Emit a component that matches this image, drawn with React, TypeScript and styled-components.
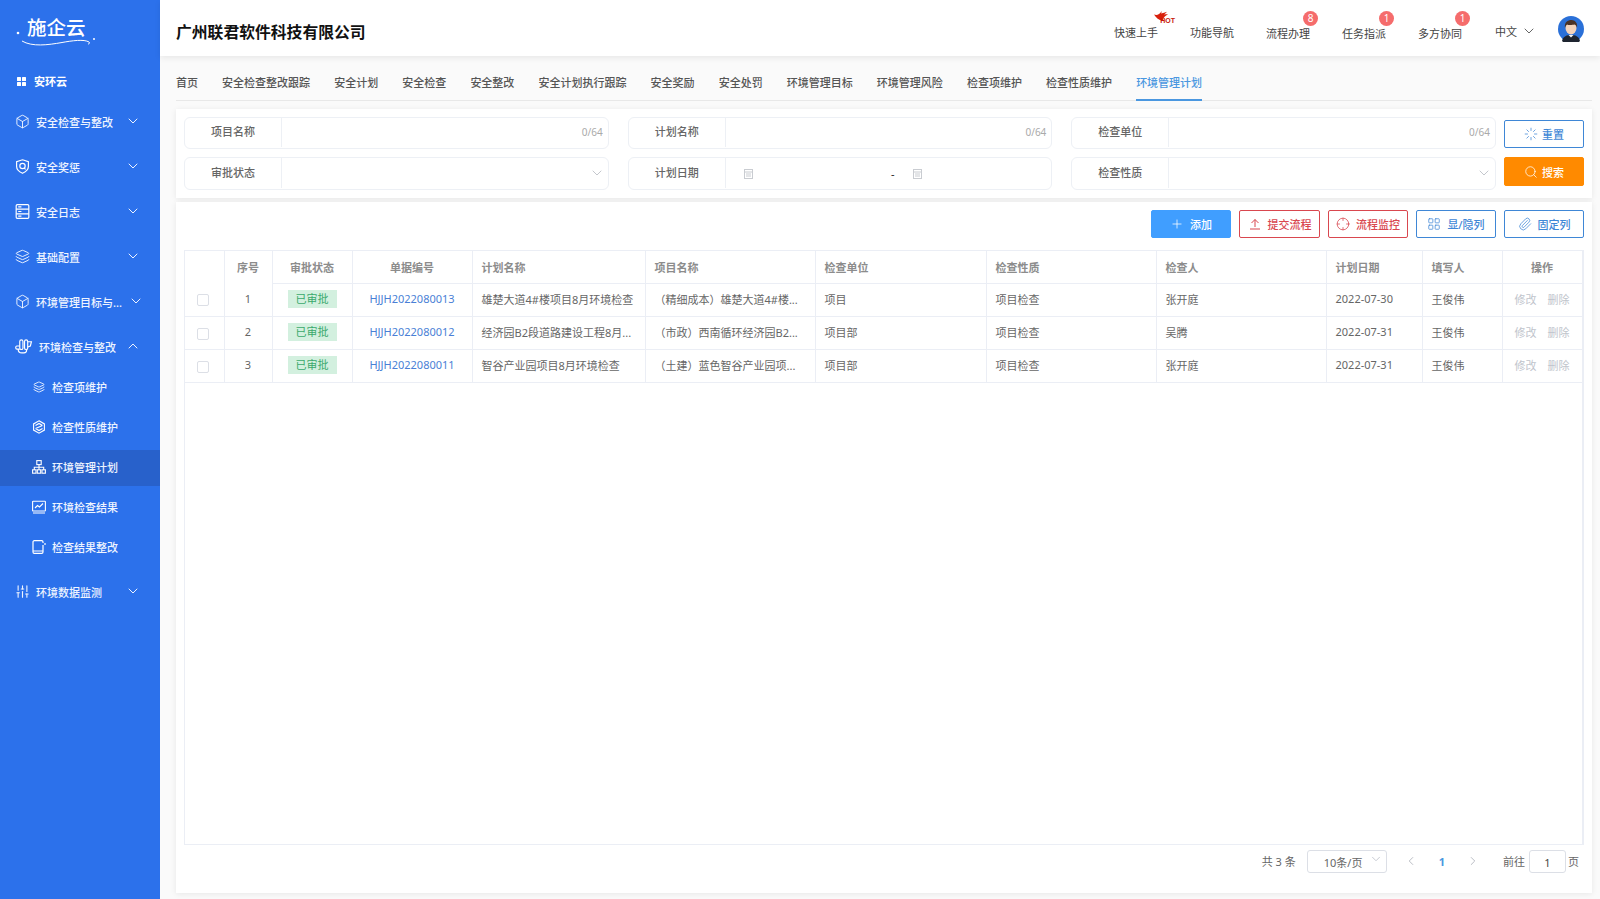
import React from 'react';
import styled, { createGlobalStyle } from 'styled-components';
import {
    Box, ChevronDown, ChevronLeft, ChevronRight, ChevronUp, Crosshair, Layers, LayoutGrid,
    Loader, Paperclip, Plus, Search, SlidersVertical,
} from 'lucide-react';

const GlobalStyle = createGlobalStyle`
    html, body { margin: 0; padding: 0; background: #fafafa; }
    body {
        font-family: "Noto Sans", "Noto Sans CJK SC", "Liberation Sans", sans-serif;
        font-size: 11px;
        color: #666;
    }
    * { box-sizing: border-box; }
`;

const Page = styled.div`
    display: flex;
    width: 1600px;
    height: 899px;
    overflow: hidden;
`;

/* ---------- sidebar ---------- */

const Sidebar = styled.aside`
    width: 160px;
    flex-shrink: 0;
    background: #2c71eb;
    color: #fff;
    display: flex;
    flex-direction: column;
`;

const Logo = styled.div`
    position: relative;
    height: 60px;
    padding: 15px 0 0 27px;
    font-size: 19.5px;
    line-height: 26px;
    font-weight: 500;
    color: #fff;
`;

const LogoSwoosh = styled.svg`
    position: absolute;
    left: 14px;
    top: 27px;
    width: 84px;
    height: 22px;
`;

const Brand = styled.div`
    height: 40px;
    display: flex;
    align-items: center;
    padding: 2px 0 0 17px;
    gap: 8px;
    font-weight: 700;
`;

const BrandIcon = styled.svg`
    width: 9px;
    height: 9px;
`;

const MenuRow = styled.div<{ $wide?: boolean }>`
    height: 45px;
    display: flex;
    align-items: center;
    padding: 0 19px 2px 15px;
    gap: 6px;
    color: #eef4ff;
    font-weight: 500;
    svg.icon { flex-shrink: 0; width: ${p => (p.$wide ? '18px' : '15px')}; height: 15px; }
`;

const MenuText = styled.span`
    flex: 1;
    white-space: nowrap;
`;

const Caret = styled.span`
    display: flex;
    width: 16px;
    margin-top: -2px;
    svg { width: 16px; height: 16px; }
`;

const SubList = styled.div`
    display: flex;
    flex-direction: column;
    gap: 4px;
    padding-bottom: 4px;
`;

const SubRow = styled.div<{ $active?: boolean }>`
    height: 36px;
    display: flex;
    align-items: center;
    padding: 0 0 2px 32px;
    gap: 6px;
    color: #eef4ff;
    font-weight: 500;
    background: ${p => (p.$active ? '#2861cb' : 'transparent')};
`;

const SubIcon = styled.span`
    width: 14px;
    height: 14px;
    display: flex;
    align-items: center;
    justify-content: center;
    svg { width: 14px; height: 14px; }
`;

const SmallLayers = styled(Layers)`
    && { width: 12px; height: 12px; }
`;

/* ---------- top bar ---------- */

const Main = styled.div`
    flex: 1;
    min-width: 0;
    display: flex;
    flex-direction: column;
`;

const TopBar = styled.header`
    height: 56px;
    flex-shrink: 0;
    background: #fff;
    box-shadow: 0 2px 6px rgba(0, 0, 0, 0.08);
    display: flex;
    align-items: center;
    padding: 0 16px;
    position: relative;
`;

const Company = styled.h1`
    margin: 0;
    flex: 1;
    padding-top: 6px;
    font-size: 15.8px;
    font-weight: 700;
    color: #111;
`;

const NavItems = styled.nav`
    display: flex;
    align-items: center;
    gap: 32px;
    padding-top: 8px;
`;

const NavItem = styled.span<{ $low?: boolean }>`
    position: relative;
    color: #444;
    white-space: nowrap;
    padding-top: ${p => (p.$low ? '2px' : '0')};
`;

const Badge = styled.span`
    position: absolute;
    right: -8px;
    top: -12px;
    width: 15px;
    height: 15px;
    border-radius: 50%;
    background: #f56c6c;
    color: #fff;
    font-size: 10px;
    line-height: 15px;
    text-align: center;
`;

const Hot = styled.span`
    position: absolute;
    right: -17px;
    top: -13px;
    width: 21px;
    height: 13px;
    color: #c8180a;
    font-size: 7px;
    line-height: 7px;
    font-weight: 800;
    font-family: "Liberation Sans", sans-serif;
    svg { position: absolute; left: 0; top: 0; width: 15px; height: 10px; }
    b { position: absolute; right: 0; bottom: 0; }
`;

const Lang = styled.span`
    display: flex;
    align-items: center;
    gap: 4px;
    margin-left: 33px;
    color: #444;
    padding-top: 6px;
    svg { width: 16px; height: 16px; color: #666; }
`;

const Avatar = styled.svg`
    width: 26px;
    height: 26px;
    margin-left: 21px;
    margin-top: 2px;
`;

/* ---------- tabs ---------- */

const Content = styled.div`
    flex: 1;
    min-height: 0;
    display: flex;
    flex-direction: column;
    padding: 0 8px 6px 16px;
`;

const Tabs = styled.div`
    height: 45px;
    flex-shrink: 0;
    display: flex;
    gap: 24.1px;
    border-bottom: 1px solid #e8e8e8;
`;

const Tab = styled.div<{ $active?: boolean }>`
    height: 45px;
    line-height: 53px;
    font-size: 11px;
    font-weight: 500;
    color: ${p => (p.$active ? '#4a97e0' : '#555')};
    border-bottom: ${p => (p.$active ? '2px solid #4a97e0' : 'none')};
    white-space: nowrap;
`;

/* ---------- filters ---------- */

const FilterCard = styled.section`
    margin-top: 8px;
    height: 89px;
    flex-shrink: 0;
    background: #fff;
    box-shadow: 0 1px 6px rgba(0, 0, 0, 0.08);
    padding: 8px;
    display: flex;
    gap: 8px;
`;

const FieldGrid = styled.div`
    flex: 1;
    display: grid;
    grid-template-columns: repeat(3, minmax(0, 1fr));
    grid-template-rows: 32px 33px;
    gap: 8px 19px;
`;

const Field = styled.div`
    display: flex;
    border: 1px solid #edf0f5;
    border-radius: 6px;
    background: #fff;
`;

const FieldLabel = styled.label`
    width: 97px;
    flex-shrink: 0;
    margin: 0 0 1px;
    padding-bottom: 3px;
    border-right: 1px solid #edf0f5;
    display: flex;
    align-items: center;
    justify-content: center;
    color: #666;
    font-weight: 500;
`;

const FieldBody = styled.div`
    flex: 1;
    display: flex;
    align-items: center;
    justify-content: flex-end;
    padding: 0 5px 2px 0;
    color: #aaa;
    font-size: 10px;
    svg { width: 16px; height: 16px; color: #c4c7cd; margin-right: -2px; }
`;

const DateBody = styled.div`
    flex: 1;
    min-width: 0;
    display: flex;
    align-items: center;
`;

const DatePart = styled.div`
    width: 164px;
    padding-left: 18px;
    display: flex;
    svg { width: 9px; height: 10px; }
    &:last-child { width: auto; flex: 1; padding-left: 17px; }
`;

const DateDash = styled.span`
    width: 6px;
    color: #222;
    text-align: center;
`;

const FilterButtons = styled.div`
    width: 80px;
    display: flex;
    flex-direction: column;
    gap: 9px;
    padding-top: 3px;
`;

const Button = styled.button<{ $tone: 'outline' | 'danger' | 'primary' | 'orange'; $tight?: boolean; $wide?: boolean }>`
    width: ${p => (p.$wide ? '81px' : '80px')};
    height: ${p => (p.$tone === 'orange' ? '29px' : '28px')};
    padding: 0;
    border-radius: 2px;
    display: flex;
    align-items: center;
    justify-content: center;
    gap: ${p => (p.$tight ? '4px' : '6px')};
    font: inherit;
    font-weight: 500;
    cursor: pointer;
    border: 1px solid ${p => ({ outline: '#3f87d6', danger: '#d9474f', primary: '#409eff', orange: '#ff8a00' }[p.$tone])};
    background: ${p => ({ outline: '#fff', danger: '#fff', primary: '#409eff', orange: '#ff8a00' }[p.$tone])};
    color: ${p => ({ outline: '#3f87d6', danger: '#d9474f', primary: '#fff', orange: '#fff' }[p.$tone])};
    svg { width: 14px; height: 14px; }
`;

/* ---------- table ---------- */

const TableCard = styled.section`
    margin-top: 4px;
    flex: 1;
    min-height: 0;
    background: #fff;
    box-shadow: 0 1px 6px rgba(0, 0, 0, 0.08);
    padding: 8px 8px 0;
    display: flex;
    flex-direction: column;
`;

const Toolbar = styled.div`
    height: 28px;
    flex-shrink: 0;
    display: flex;
    justify-content: flex-end;
    gap: 8px;
`;

const TableBox = styled.div`
    margin-top: 12px;
    height: 595px;
    flex-shrink: 0;
    border: 1px solid #ebeef5;
    border-right-width: 2px;
`;

const Table = styled.table`
    width: 100%;
    table-layout: fixed;
    border-collapse: collapse;
`;

const Th = styled.th<{ $left?: boolean; $open?: boolean }>`
    height: 32px;
    padding: 0 9px;
    font-size: 11px;
    font-weight: 700;
    color: #8c8c8c;
    text-align: ${p => (p.$left ? 'left' : 'center')};
    border-right: 1px solid #ebeef5;
    border-bottom: ${p => (p.$open ? 'none' : '1px solid #ebeef5')};
`;

const Td = styled.td<{ $left?: boolean }>`
    height: 33px;
    padding: 0 9px 2px;
    color: #666;
    text-align: ${p => (p.$left ? 'left' : 'center')};
    border-right: 1px solid #ebeef5;
    border-bottom: 1px solid #ebeef5;
    white-space: nowrap;
`;

const CheckCell = styled(Td)`
    padding: 2px 0 0 12px;
`;

const Check = styled.span`
    display: block;
    width: 12px;
    height: 12px;
    border: 1px solid #dcdfe6;
    border-radius: 2px;
    background: #fff;
`;

const StatusTag = styled.span`
    display: inline-block;
    width: 49px;
    height: 18px;
    margin-top: 1px;
    line-height: 18px;
    text-align: center;
    background: #d3f0df;
    color: #3aa96c;
`;

const DocLink = styled.a`
    color: #4a7fd6;
    text-decoration: none;
`;

const OpLink = styled.span`
    color: #c0c4cc;
    & + & { margin-left: 11px; }
`;

/* ---------- pagination ---------- */

const Pager = styled.div`
    flex: 1;
    display: flex;
    align-items: center;
    justify-content: flex-end;
    padding: 0 5px 16px 0;
    color: #666;
`;

const PagerSelect = styled.div`
    position: relative;
    width: 80px;
    height: 23px;
    margin-left: 11px;
    border: 1px solid #dcdfe6;
    border-radius: 3px;
    line-height: 24px;
    padding-left: 16px;
    svg { position: absolute; right: 3px; top: 1px; width: 14px; height: 14px; color: #c0c4cc; }
`;

const PagerArrow = styled.span<{ $gapLeft?: number; $gapRight?: number }>`
    display: flex;
    color: #b0b4bb;
    margin: 0 ${p => p.$gapRight ?? 0}px 0 ${p => p.$gapLeft ?? 0}px;
    svg { width: 14px; height: 14px; }
`;

const PagerNum = styled.span`
    color: #4a97e0;
    font-weight: 700;
    margin: 0 21px;
`;

const PagerInput = styled.div`
    width: 37px;
    height: 23px;
    margin: 0 2px 0 4px;
    border: 1px solid #dcdfe6;
    border-radius: 3px;
    text-align: center;
    line-height: 24px;
    color: #444;
`;

const CalendarIcon = () => (
    <svg viewBox="0 0 9 10" fill="none" stroke="#c9ccd1" strokeWidth="1">
        <rect x="0.5" y="0.5" width="8" height="9" />
        <path d="M0.5 3h8M2 5h5M2 7h5" />
    </svg>
);

const columns = [39, 48, 80, 120, 173, 170, 171, 170, 170, 96, 80, 80];

const rows = [
    { no: 1, code: 'HJJH2022080013', plan: '雄楚大道4#楼项目8月环境检查', project: '（精细成本）雄楚大道4#楼...', unit: '项目', person: '张开庭', date: '2022-07-30' },
    { no: 2, code: 'HJJH2022080012', plan: '经济园B2段道路建设工程8月...', project: '（市政）西南循环经济园B2...', unit: '项目部', person: '吴腾', date: '2022-07-31' },
    { no: 3, code: 'HJJH2022080011', plan: '智谷产业园项目8月环境检查', project: '（土建）蓝色智谷产业园项...', unit: '项目部', person: '张开庭', date: '2022-07-31' },
];

const tabs = ['首页', '安全检查整改跟踪', '安全计划', '安全检查', '安全整改', '安全计划执行跟踪', '安全奖励', '安全处罚', '环境管理目标', '环境管理风险', '检查项维护', '检查性质维护', '环境管理计划'];

const App: React.FC = () => {
    return (
        <Page>
            <GlobalStyle />
            <Sidebar>
                <Logo>
                    施企云
                    <LogoSwoosh viewBox="0 0 84 22" fill="none">
                        <circle cx="4" cy="6" r="1.3" fill="#fff" />
                        <path d="M8 14c10 6 26 4 40 1.500c10-1.800 22-3.500 27-.5c1 .8.500 2-1 2" stroke="#fff" strokeWidth="1" />
                        <circle cx="80" cy="12" r="1" fill="#fff" />
                    </LogoSwoosh>
                </Logo>
                <Brand>
                    <BrandIcon viewBox="0 0 9 9" fill="#fff">
                        <rect width="4" height="4" rx="0.5" />
                        <rect x="5" width="4" height="4" rx="0.5" />
                        <rect y="5" width="4" height="4" rx="0.5" />
                        <rect x="5" y="5" width="4" height="4" rx="0.5" />
                    </BrandIcon>
                    安环云
                </Brand>
                <MenuRow>
                    <Box className="icon" strokeWidth={1.5} />
                    <MenuText>安全检查与整改</MenuText>
                    <Caret><ChevronDown strokeWidth={1.5} /></Caret>
                </MenuRow>
                <MenuRow>
                    <svg className="icon" viewBox="0 0 13 14" fill="none" stroke="#fff" strokeWidth="1.100">
                        <path d="M6.500 .7l5.500 1.800v4.500c0 3-2.500 5-5.500 6.300C3.500 12 1 10 1 7V2.500z" />
                        <circle cx="6.500" cy="6.500" r="2.500" />
                        <path d="M8 8.500l1.500 1.200" />
                    </svg>
                    <MenuText>安全奖惩</MenuText>
                    <Caret><ChevronDown strokeWidth={1.5} /></Caret>
                </MenuRow>
                <MenuRow>
                    <svg className="icon" viewBox="0 0 13 14" fill="none" stroke="#fff" strokeWidth="1.100">
                        <rect x="0.600" y="0.600" width="11.800" height="12.800" rx="1" />
                        <path d="M.6 4.800h11.800M.6 9.200h11.800M2.500 2.700h3M2.500 7h3M2.500 11.300h3" />
                    </svg>
                    <MenuText>安全日志</MenuText>
                    <Caret><ChevronDown strokeWidth={1.5} /></Caret>
                </MenuRow>
                <MenuRow>
                    <Layers className="icon" strokeWidth={1.5} />
                    <MenuText>基础配置</MenuText>
                    <Caret><ChevronDown strokeWidth={1.5} /></Caret>
                </MenuRow>
                <MenuRow>
                    <Box className="icon" strokeWidth={1.5} />
                    <MenuText>环境管理目标与...</MenuText>
                    <Caret><ChevronDown strokeWidth={1.5} /></Caret>
                </MenuRow>
                <MenuRow $wide>
                    <svg className="icon" viewBox="0 0 17 14" fill="none" stroke="#fff" strokeWidth="1.100">
                        <rect x="4.500" y="0.800" width="3" height="9" rx="1.500" />
                        <rect x="9" y="0.800" width="3" height="9" rx="1.500" />
                        <path d="M12 2.500h3.500l-1 4-2.500 1M4.500 6.500H1.800c-1.500 0-1.500 3 0 3h2.700M3 9.500c0 2.500 1.500 3.500 3.500 3.500h2c1.500 0 2.500-1 2.500-3" />
                    </svg>
                    <MenuText>环境检查与整改</MenuText>
                    <Caret><ChevronUp strokeWidth={1.5} /></Caret>
                </MenuRow>
                <SubList>
                    <SubRow>
                        <SubIcon><SmallLayers strokeWidth={1.8} /></SubIcon>
                        检查项维护
                    </SubRow>
                    <SubRow>
                        <SubIcon>
                            <svg viewBox="0 0 14 14" fill="none" stroke="#fff" strokeWidth="1.100">
                                <path d="M7 .8l5.400 3.100v6.200L7 13.200 1.600 10.100V3.900z" />
                                <path d="M3.500 5.500L7 3.500l3.500 2M3.500 8.500l7-3M3.500 8.500L7 10.500l3.500-2" />
                            </svg>
                        </SubIcon>
                        检查性质维护
                    </SubRow>
                    <SubRow $active>
                        <SubIcon>
                            <svg viewBox="0 0 14 14" fill="none" stroke="#fff" strokeWidth="1.100">
                                <rect x="4.800" y="0.600" width="4.400" height="4" />
                                <rect x="0.600" y="9.800" width="3.400" height="3.400" />
                                <rect x="5.300" y="9.800" width="3.400" height="3.400" />
                                <rect x="10" y="9.800" width="3.400" height="3.400" />
                                <path d="M7 4.600v5.200M2.300 9.800V7.200h9.400v2.600" />
                            </svg>
                        </SubIcon>
                        环境管理计划
                    </SubRow>
                    <SubRow>
                        <SubIcon>
                            <svg viewBox="0 0 14 14" fill="none" stroke="#fff" strokeWidth="1.100">
                                <rect x="0.600" y="1.200" width="12.800" height="9.800" rx="0.600" />
                                <path d="M3 8l2.500-2.500 2 1.500L11 3.500M1 13h12" />
                            </svg>
                        </SubIcon>
                        环境检查结果
                    </SubRow>
                    <SubRow>
                        <SubIcon>
                            <svg viewBox="0 0 14 14" fill="none" stroke="#fff" strokeWidth="1.200">
                                <path d="M11 5v7c0 .8-.5 1.300-1.300 1.300H2.300C1.500 13.300 1 12.800 1 12V2C1 1.200 1.500.7 2.300.7h7.400C10.500.7 11 1.200 11 2v1" />
                                <path d="M1 11h10M13 3v2" />
                            </svg>
                        </SubIcon>
                        检查结果整改
                    </SubRow>
                </SubList>
                <MenuRow>
                    <SlidersVertical className="icon" strokeWidth={1.8} />
                    <MenuText>环境数据监测</MenuText>
                    <Caret><ChevronDown strokeWidth={1.5} /></Caret>
                </MenuRow>
            </Sidebar>
            <Main>
                <TopBar>
                    <Company>广州联君软件科技有限公司</Company>
                    <NavItems>
                        <NavItem>
                            快速上手
                            <Hot>
                                <svg viewBox="0 0 15 10" fill="#d8200c">
                                    <path d="M0 3.500c2 .8 3.500.5 5-.5C6.500 2 7 1 7.500 0c0 1 .2 1.500-.5 2.500C9 2 11 1.500 13 .8c-1 1.200-2 2-3 2.700 1.500-.2 3-.2 4 0-1.500.5-3 1.500-4 3-.5 1-1 2-1.500 3.500C5 9 2 7 0 3.500z" />
                                </svg>
                                <b>HOT</b>
                            </Hot>
                        </NavItem>
                        <NavItem>功能导航</NavItem>
                        <NavItem $low>流程办理<Badge>8</Badge></NavItem>
                        <NavItem $low>任务指派<Badge>1</Badge></NavItem>
                        <NavItem $low>多方协同<Badge>1</Badge></NavItem>
                    </NavItems>
                    <Lang>中文 <ChevronDown strokeWidth={1.5} /></Lang>
                    <Avatar viewBox="0 0 26 26">
                        <circle cx="13" cy="13" r="13" fill="#2a70d8" />
                        <path d="M4 25c1-5 5-6 9-6s8 1 9 6a13 13 0 0 1-18 0z" fill="#1e2530" />
                        <path d="M10.500 19l2.500 2.500 2.500-2.500z" fill="#f4f4f4" />
                        <ellipse cx="13" cy="12" rx="5.500" ry="6.500" fill="#f3d3bb" />
                        <path d="M7 12c-1-6 3-8 6.500-8S20 7 19 12c-.5-2-1-3-2.500-3.500-2 .5-6 .8-7.500 0C8 9.500 7.500 10.500 7 12z" fill="#4a3226" />
                    </Avatar>
                </TopBar>
                <Content>
                    <Tabs>
                        {tabs.map((t, i) => (
                            <Tab key={t} $active={i === tabs.length - 1}>{t}</Tab>
                        ))}
                    </Tabs>
                    <FilterCard>
                        <FieldGrid>
                            <Field><FieldLabel>项目名称</FieldLabel><FieldBody>0/64</FieldBody></Field>
                            <Field><FieldLabel>计划名称</FieldLabel><FieldBody>0/64</FieldBody></Field>
                            <Field><FieldLabel>检查单位</FieldLabel><FieldBody>0/64</FieldBody></Field>
                            <Field><FieldLabel>审批状态</FieldLabel><FieldBody><ChevronDown strokeWidth={1.5} /></FieldBody></Field>
                            <Field>
                                <FieldLabel>计划日期</FieldLabel>
                                <DateBody>
                                    <DatePart><CalendarIcon /></DatePart>
                                    <DateDash>-</DateDash>
                                    <DatePart><CalendarIcon /></DatePart>
                                </DateBody>
                            </Field>
                            <Field><FieldLabel>检查性质</FieldLabel><FieldBody><ChevronDown strokeWidth={1.5} /></FieldBody></Field>
                        </FieldGrid>
                        <FilterButtons>
                            <Button $tone="outline" $tight><Loader strokeWidth={1.3} />重置</Button>
                            <Button $tone="orange" $tight><Search strokeWidth={1.3} />搜索</Button>
                        </FilterButtons>
                    </FilterCard>
                    <TableCard>
                        <Toolbar>
                            <Button $tone="primary"><Plus strokeWidth={1.3} />添加</Button>
                            <Button $tone="danger" $wide>
                                <svg viewBox="0 0 14 14" fill="none" stroke="currentColor" strokeWidth="1">
                                    <path d="M7 10V2.500M3.500 6L7 2.500 10.500 6M2 12h10" />
                                </svg>
                                提交流程
                            </Button>
                            <Button $tone="danger"><Crosshair strokeWidth={1.3} />流程监控</Button>
                            <Button $tone="outline"><LayoutGrid strokeWidth={1.3} />显/隐列</Button>
                            <Button $tone="outline"><Paperclip strokeWidth={1.3} />固定列</Button>
                        </Toolbar>
                        <TableBox>
                            <Table>
                                <colgroup>
                                    {columns.map((w, i) => <col key={i} style={{ width: w }} />)}
                                </colgroup>
                                <thead>
                                    <tr>
                                        <Th $open></Th>
                                        <Th $open>序号</Th>
                                        <Th>审批状态</Th>
                                        <Th>单据编号</Th>
                                        <Th $left>计划名称</Th>
                                        <Th $left>项目名称</Th>
                                        <Th $left>检查单位</Th>
                                        <Th $left>检查性质</Th>
                                        <Th $left>检查人</Th>
                                        <Th $left>计划日期</Th>
                                        <Th $left>填写人</Th>
                                        <Th>操作</Th>
                                    </tr>
                                </thead>
                                <tbody>
                                    {rows.map(r => (
                                        <tr key={r.no}>
                                            <CheckCell><Check /></CheckCell>
                                            <Td>{r.no}</Td>
                                            <Td><StatusTag>已审批</StatusTag></Td>
                                            <Td><DocLink>{r.code}</DocLink></Td>
                                            <Td $left>{r.plan}</Td>
                                            <Td $left>{r.project}</Td>
                                            <Td $left>{r.unit}</Td>
                                            <Td $left>项目检查</Td>
                                            <Td $left>{r.person}</Td>
                                            <Td $left>{r.date}</Td>
                                            <Td $left>王俊伟</Td>
                                            <Td><OpLink>修改</OpLink><OpLink>删除</OpLink></Td>
                                        </tr>
                                    ))}
                                </tbody>
                            </Table>
                        </TableBox>
                        <Pager>
                            共 3 条
                            <PagerSelect>10条/页<ChevronDown strokeWidth={1.5} /></PagerSelect>
                            <PagerArrow $gapLeft={17}><ChevronLeft strokeWidth={1.5} /></PagerArrow>
                            <PagerNum>1</PagerNum>
                            <PagerArrow $gapRight={23}><ChevronRight strokeWidth={1.5} /></PagerArrow>
                            前往
                            <PagerInput>1</PagerInput>
                            页
                        </Pager>
                    </TableCard>
                </Content>
            </Main>
        </Page>
    );
};

export default App;
